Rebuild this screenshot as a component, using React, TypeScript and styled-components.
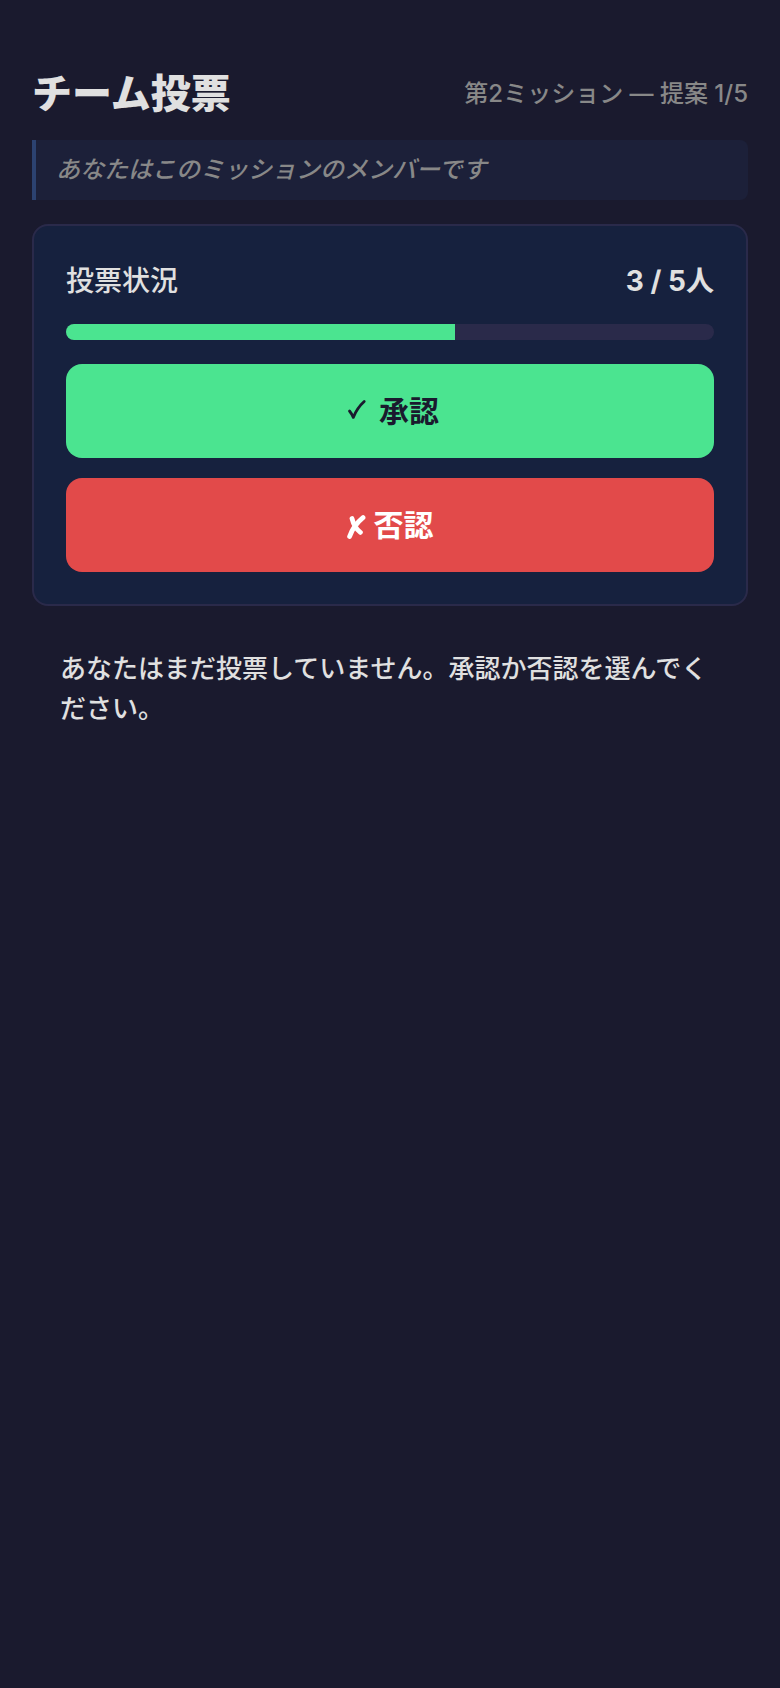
import React from "react";
import styled, { createGlobalStyle } from "styled-components";

const GlobalStyle = createGlobalStyle`
  * {
    box-sizing: border-box;
  }
  body {
    margin: 0;
    background-color: #1a1a2e;
    color: #e0e0e0;
    font-family: Inter, "Noto Sans CJK JP", sans-serif;
  }
`;

const Page = styled.main`
  min-height: 100vh;
  padding: 64px 32px 32px;
`;

const Header = styled.header`
  display: flex;
  justify-content: space-between;
  align-items: center;
  margin-bottom: 16px;
`;

const Title = styled.h1`
  margin: 0;
  font-size: 40px;
  line-height: 60px;
  font-weight: 900;
`;

const MissionInfo = styled.span`
  color: #888888;
  font-size: 24px;
  line-height: 60px;
  font-weight: 500;
`;

const RoleNote = styled.p`
  margin: 0 0 24px;
  padding: 10px 20px;
  border-left: 4px solid #2c4270;
  border-radius: 0 8px 8px 0;
  background-color: #1c2039;
  color: #888888;
  font-size: 24px;
  line-height: 40px;
  font-weight: 500;
  font-style: italic;
`;

const Card = styled.section`
  padding: 32px;
  border: 2px solid #2a2a4a;
  border-radius: 16px;
  background-color: #16213e;
`;

const StatusRow = styled.div`
  display: flex;
  justify-content: space-between;
  align-items: center;
  margin-bottom: 20px;
  font-size: 28px;
  line-height: 46px;
  font-weight: 500;
`;

const VoteCount = styled.strong`
  font-weight: 700;
`;

const Track = styled.div`
  height: 16px;
  margin-bottom: 24px;
  border-radius: 8px;
  overflow: hidden;
  background-color: #2a2a4a;
`;

const Fill = styled.div`
  height: 100%;
  background-color: #4be490;
`;

const Buttons = styled.div`
  display: flex;
  flex-direction: column;
  gap: 20px;
`;

const VoteButton = styled.button<{ $bg: string; $color: string }>`
  display: flex;
  justify-content: center;
  align-items: center;
  gap: 8px;
  width: 100%;
  padding: 22px 24px 26px;
  border: none;
  border-radius: 16px;
  background-color: ${(props) => props.$bg};
  color: ${(props) => props.$color};
  font-family: "Noto Sans CJK JP", sans-serif;
  font-size: 30px;
  line-height: 46px;
  font-weight: 700;
  cursor: pointer;
`;

const Message = styled.p`
  margin: 0;
  padding: 43px 28px;
  font-size: 26px;
  line-height: 40px;
  font-weight: 500;
`;

const CheckMark = () => (
  <svg width="30" height="30" viewBox="0 0 30 30" fill="none" aria-hidden="true">
    <path
      d="M8.5 17C10 18.8 11.2 20.8 12.3 23.4C14.6 17.5 18.4 11.8 23.2 7.5"
      stroke="currentColor"
      strokeWidth="2.8"
      strokeLinecap="round"
      strokeLinejoin="round"
    />
  </svg>
);

const CrossMark = () => (
  <svg width="19" height="34" viewBox="0 0 19 34" fill="none" aria-hidden="true">
    <path
      d="M5 12.5C6.2 17.5 9.4 23.4 13.4 26.4M16 11.6C10.8 15.8 5.4 22.5 2.6 30.5"
      stroke="currentColor"
      strokeWidth="4.8"
      strokeLinecap="round"
    />
  </svg>
);

const App = () => {
  const voted = 3;
  const total = 5;

  return (
    <>
      <GlobalStyle />
      <Page lang="ja">
        <Header>
          <Title>チーム投票</Title>
          <MissionInfo>第2ミッション — 提案 1/5</MissionInfo>
        </Header>
        <RoleNote>あなたはこのミッションのメンバーです</RoleNote>
        <Card>
          <StatusRow>
            <span>投票状況</span>
            <VoteCount>
              {voted} / {total}人
            </VoteCount>
          </StatusRow>
          <Track>
            <Fill style={{ width: `${(voted / total) * 100}%` }} />
          </Track>
          <Buttons>
            <VoteButton $bg="#4be490" $color="#1a1a2e">
              <CheckMark />
              承認
            </VoteButton>
            <VoteButton $bg="#e24a4a" $color="#ffffff">
              <CrossMark />
              否認
            </VoteButton>
          </Buttons>
        </Card>
        <Message>あなたはまだ投票していません。承認か否認を選んでください。</Message>
      </Page>
    </>
  );
};

export default App;
